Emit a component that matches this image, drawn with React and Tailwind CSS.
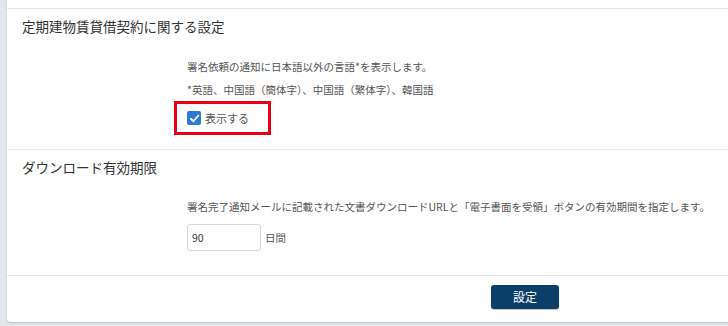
import React from 'react';

const FONT = { fontFamily: '"Noto Sans CJK JP", "Noto Sans", sans-serif' };

const SettingsPanel = () => {
    return (
        <div className="w-[728px] h-[326px] bg-[#e4e7ea] pl-[7px] overflow-hidden" style={FONT}>
            <div className="bg-white rounded-bl-[4px] shadow-[0_1px_2px_rgba(0,0,0,0.18)] h-[322px] flex flex-col">
                <div className="h-[9px] border-b border-[#e8e8e8] shrink-0"></div>

                {/* 定期建物 */}
                <div className="px-[15px] pt-[8px] pb-[14px] border-b border-[#e8e8e8]">
                    <h2 className="text-[13.5px] leading-[18px] text-[#333]">定期建物賃貸借契約に関する設定</h2>
                    <div className="ml-[165px] mt-[24px] text-[10.5px] leading-[16px] text-[#555]">
                        <p>署名依頼の通知に日本語以外の言語*を表示します。</p>
                        <p className="mt-[7px]">*英語、中国語（簡体字）、中国語（繁体字）、韓国語</p>
                        <div className="inline-flex items-center gap-[4px] -ml-[13px] mt-[3px] border-[3px] border-[#e60012] pl-[10px] pr-[19px] py-[7px]">
                            <span className="w-[14px] h-[14px] rounded-[2px] bg-[#2b7bd6] flex items-center justify-center">
                                <svg width="11" height="11" viewBox="0 0 12 12" fill="none">
                                    <path d="M2 6.3 L4.8 9 L10 3" stroke="white" strokeWidth="2" strokeLinecap="round" strokeLinejoin="round" />
                                </svg>
                            </span>
                            <span className="text-[11px] leading-[14px]">表示する</span>
                        </div>
                    </div>
                </div>

                {/* ダウンロード */}
                <div className="px-[15px] pt-[8px] pb-[24px] border-b border-[#e8e8e8]">
                    <h2 className="text-[13.5px] leading-[18px] text-[#333]">ダウンロード有効期限</h2>
                    <div className="ml-[165px] mt-[23px] text-[10.5px] leading-[16px] text-[#555]">
                        <p>署名完了通知メールに記載された文書ダウンロードURLと「電子書面を受領」ボタンの有効期間を指定します。</p>
                        <div className="flex items-center gap-[4px] mt-[9px]">
                            <input
                                defaultValue="90"
                                className="w-[74px] h-[27px] border border-[#d4d8dd] rounded-[3px] px-[4px] text-[10.5px] text-[#333] outline-none"
                                style={FONT}
                            />
                            <span>日間</span>
                        </div>
                    </div>
                </div>

                <div className="pl-[484px] pt-[7px]">
                    <button className="w-[68px] h-[24px] bg-[#0b3e68] rounded-[3px] text-white text-[12px] shadow-[0_1px_1px_rgba(0,0,0,0.25)]" style={FONT}>
                        設定
                    </button>
                </div>
            </div>
        </div>
    );
};

export default function App() {
    return <SettingsPanel />;
}
